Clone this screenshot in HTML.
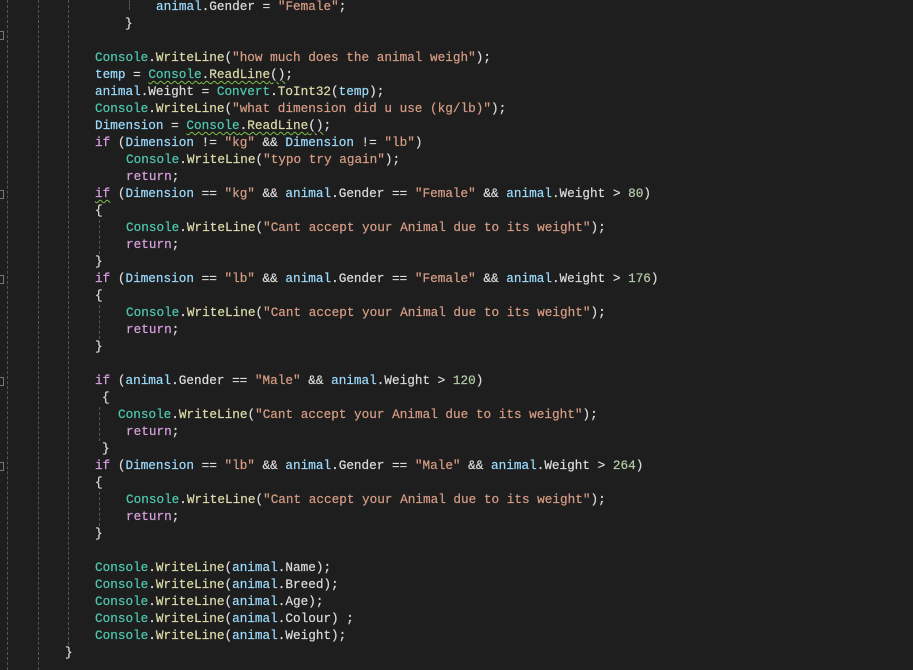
<!DOCTYPE html>
<html><head><meta charset="utf-8"><style>
html,body{margin:0;padding:0;background:#1e1e1e;width:913px;height:670px;overflow:hidden;position:relative}
#c{position:absolute;left:0;top:1px;width:913px;height:670px}
.l{position:absolute;white-space:pre;font-family:"Liberation Mono",monospace;font-size:12.7px;line-height:17px;height:17px;color:#dcdcdc;-webkit-text-stroke:0.2px currentColor}
.v{color:#9cdcfe}.t{color:#4ec9b0}.m{color:#dcdcaa}.s{color:#d69d85}.k{color:#d8a0df}.n{color:#b5cea8}
.w{text-decoration:underline wavy #7fbf4a;text-decoration-thickness:1px;text-underline-offset:2px}
.g{position:absolute;width:0;border-left:1px dashed #555}
.mk{position:absolute;left:0;width:3px;height:7px;border:1px solid #777;border-left:none}
</style></head><body>
<div class="g" style="left:7px;top:0;height:670px"></div>
<div class="g" style="left:38px;top:0;height:670px"></div>
<div class="g" style="left:68px;top:0;height:645px"></div>
<div class="g" style="left:129px;top:0;height:10px"></div>
<div id="c">
<div class="g" style="left:99px;top:219px;height:34px"></div>
<div class="g" style="left:99px;top:304px;height:34px"></div>
<div class="g" style="left:99px;top:406px;height:34px"></div>
<div class="g" style="left:99px;top:491px;height:34px"></div>
<div class="mk" style="top:30px"></div>
<div class="mk" style="top:189px"></div>
<div class="mk" style="top:274px"></div>
<div class="mk" style="top:376px"></div>
<div class="mk" style="top:461px"></div>

<div class="l" style="left:156px;top:-3px"><span class="v">animal</span>.Gender = <span class="s">"Female"</span>;</div>
<div class="l" style="left:125px;top:14px">}</div>
<div class="l" style="left:95px;top:48px"><span class="t">Console</span>.<span class="m">WriteLine</span>(<span class="s">"how much does the animal weigh"</span>);</div>
<div class="l" style="left:95px;top:65px"><span class="v">temp</span> = <span class="w"><span class="t">Console</span>.<span class="m">ReadLine</span>()</span>;</div>
<div class="l" style="left:95px;top:82px"><span class="v">animal</span>.Weight = <span class="t">Convert</span>.<span class="m">ToInt32</span>(<span class="v">temp</span>);</div>
<div class="l" style="left:95px;top:99px"><span class="t">Console</span>.<span class="m">WriteLine</span>(<span class="s">"what dimension did u use (kg/lb)"</span>);</div>
<div class="l" style="left:95px;top:116px"><span class="v">Dimension</span> = <span class="w"><span class="t">Console</span>.<span class="m">ReadLine</span>()</span>;</div>
<div class="l" style="left:95px;top:133px"><span class="k">if</span> (<span class="v">Dimension</span> != <span class="s">"kg"</span> &amp;&amp; <span class="v">Dimension</span> != <span class="s">"lb"</span>)</div>
<div class="l" style="left:126px;top:150px"><span class="t">Console</span>.<span class="m">WriteLine</span>(<span class="s">"typo try again"</span>);</div>
<div class="l" style="left:126px;top:167px"><span class="k">return</span>;</div>
<div class="l" style="left:95px;top:184px"><span class="k w">if</span> (<span class="v">Dimension</span> == <span class="s">"kg"</span> &amp;&amp; <span class="v">animal</span>.Gender == <span class="s">"Female"</span> &amp;&amp; <span class="v">animal</span>.Weight &gt; <span class="n">80</span>)</div>
<div class="l" style="left:95px;top:201px">{</div>
<div class="l" style="left:126px;top:218px"><span class="t">Console</span>.<span class="m">WriteLine</span>(<span class="s">"Cant accept your Animal due to its weight"</span>);</div>
<div class="l" style="left:126px;top:235px"><span class="k">return</span>;</div>
<div class="l" style="left:95px;top:252px">}</div>
<div class="l" style="left:95px;top:269px"><span class="k">if</span> (<span class="v">Dimension</span> == <span class="s">"lb"</span> &amp;&amp; <span class="v">animal</span>.Gender == <span class="s">"Female"</span> &amp;&amp; <span class="v">animal</span>.Weight &gt; <span class="n">176</span>)</div>
<div class="l" style="left:95px;top:286px">{</div>
<div class="l" style="left:126px;top:303px"><span class="t">Console</span>.<span class="m">WriteLine</span>(<span class="s">"Cant accept your Animal due to its weight"</span>);</div>
<div class="l" style="left:126px;top:320px"><span class="k">return</span>;</div>
<div class="l" style="left:95px;top:337px">}</div>
<div class="l" style="left:95px;top:371px"><span class="k">if</span> (<span class="v">animal</span>.Gender == <span class="s">"Male"</span> &amp;&amp; <span class="v">animal</span>.Weight &gt; <span class="n">120</span>)</div>
<div class="l" style="left:102px;top:388px">{</div>
<div class="l" style="left:118px;top:405px"><span class="t">Console</span>.<span class="m">WriteLine</span>(<span class="s">"Cant accept your Animal due to its weight"</span>);</div>
<div class="l" style="left:126px;top:422px"><span class="k">return</span>;</div>
<div class="l" style="left:102px;top:439px">}</div>
<div class="l" style="left:95px;top:456px"><span class="k">if</span> (<span class="v">Dimension</span> == <span class="s">"lb"</span> &amp;&amp; <span class="v">animal</span>.Gender == <span class="s">"Male"</span> &amp;&amp; <span class="v">animal</span>.Weight &gt; <span class="n">264</span>)</div>
<div class="l" style="left:95px;top:473px">{</div>
<div class="l" style="left:126px;top:490px"><span class="t">Console</span>.<span class="m">WriteLine</span>(<span class="s">"Cant accept your Animal due to its weight"</span>);</div>
<div class="l" style="left:126px;top:507px"><span class="k">return</span>;</div>
<div class="l" style="left:95px;top:524px">}</div>
<div class="l" style="left:95px;top:558px"><span class="t">Console</span>.<span class="m">WriteLine</span>(<span class="v">animal</span>.Name);</div>
<div class="l" style="left:95px;top:575px"><span class="t">Console</span>.<span class="m">WriteLine</span>(<span class="v">animal</span>.Breed);</div>
<div class="l" style="left:95px;top:592px"><span class="t">Console</span>.<span class="m">WriteLine</span>(<span class="v">animal</span>.Age);</div>
<div class="l" style="left:95px;top:609px"><span class="t">Console</span>.<span class="m">WriteLine</span>(<span class="v">animal</span>.Colour) ;</div>
<div class="l" style="left:95px;top:626px"><span class="t">Console</span>.<span class="m">WriteLine</span>(<span class="v">animal</span>.Weight);</div>
<div class="l" style="left:65px;top:643px">}</div>
</div>
</body></html>
